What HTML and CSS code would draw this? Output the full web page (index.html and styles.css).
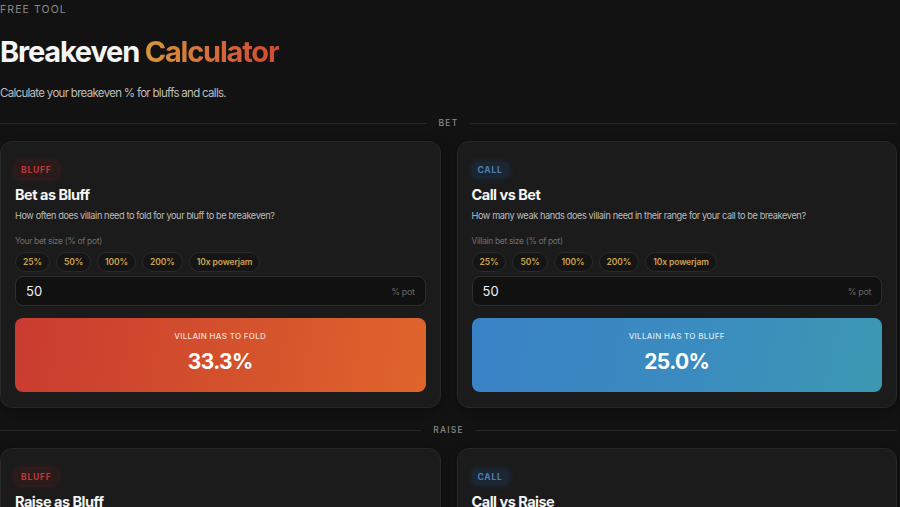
FILE: index.html
```html
<!DOCTYPE html>
<html>
<head>
<meta charset="utf-8">
<link rel="stylesheet" href="styles.css">
</head>
<body>
<div class="page">
  <div class="eyebrow">FREE TOOL</div>
  <h1 class="title">Breakeven <span class="grad">Calculator</span></h1>
  <p class="subtitle">Calculate your breakeven % for bluffs and calls.</p>

  <div class="sep"><span>BET</span></div>
  <div class="grid">
    <div class="card">
      <span class="badge bluff">BLUFF</span>
      <h2 class="card-title">Bet as Bluff</h2>
      <p class="desc">How often does villain need to fold for your bluff to be breakeven?</p>
      <div class="label">Your bet size (% of pot)</div>
      <div class="pills">
        <span class="pill">25%</span><span class="pill">50%</span><span class="pill">100%</span><span class="pill">200%</span><span class="pill">10x powerjam</span>
      </div>
      <div class="input"><span class="val">50</span><span class="unit">% pot</span></div>
      <div class="result red">
        <div class="r-label">VILLAIN HAS TO FOLD</div>
        <div class="r-val">33.3%</div>
      </div>
    </div>
    <div class="card">
      <span class="badge call">CALL</span>
      <h2 class="card-title">Call vs Bet</h2>
      <p class="desc">How many weak hands does villain need in their range for your call to be breakeven?</p>
      <div class="label">Villain bet size (% of pot)</div>
      <div class="pills">
        <span class="pill">25%</span><span class="pill">50%</span><span class="pill">100%</span><span class="pill">200%</span><span class="pill">10x powerjam</span>
      </div>
      <div class="input"><span class="val">50</span><span class="unit">% pot</span></div>
      <div class="result blue">
        <div class="r-label">VILLAIN HAS TO BLUFF</div>
        <div class="r-val">25.0%</div>
      </div>
    </div>
  </div>

  <div class="sep"><span>RAISE</span></div>
  <div class="grid">
    <div class="card">
      <span class="badge bluff">BLUFF</span>
      <h2 class="card-title">Raise as Bluff</h2>
      <p class="desc">How often does villain need to fold for your raise to be breakeven?</p>
    </div>
    <div class="card">
      <span class="badge call">CALL</span>
      <h2 class="card-title">Call vs Raise</h2>
      <p class="desc">How many weak hands does villain need for your call to be breakeven?</p>
    </div>
  </div>
</div>
</body>
</html>
```
FILE: styles.css
```css
html, body {
  margin: 0;
  padding: 0;
  background: #121212;
  color: #f2f2f2;
  font-family: "Inter", "Noto Sans", sans-serif;
  overflow: hidden;
  height: 507px;
}
.page {
  width: 897px;
  padding: 0;
}
.eyebrow {
  font-size: 10.5px;
  letter-spacing: 1.1px;
  color: #8a8a8a;
  line-height: 14px;
  margin-top: 3px;
}
.title {
  margin: 17px 0 0 0;
  font-size: 29px;
  line-height: 36px;
  font-weight: 700;
  letter-spacing: -1.2px;
  color: #f5f5f5;
}
.grad {
  background: linear-gradient(90deg, #d8973c 0%, #d4643a 60%, #cf4a30 100%);
  -webkit-background-clip: text;
  background-clip: text;
  color: transparent;
}
.subtitle {
  margin: 15px 0 0 0;
  font-size: 11.5px;
  line-height: 16px;
  color: #bdbdbd;
  letter-spacing: -0.7px;
}
.sep {
  display: flex;
  align-items: center;
  gap: 12px;
  margin-top: 15px;
  height: 14px;
}
.sep::before, .sep::after {
  content: "";
  flex: 1;
  height: 1px;
  background: #252525;
}
.sep span {
  font-size: 8.5px;
  font-weight: 500;
  letter-spacing: 1.2px;
  color: #8a8a8a;
}
.grid {
  display: grid;
  grid-template-columns: 1fr 1fr;
  gap: 16px;
  margin-top: 11px;
}
.card {
  background: #1b1b1b;
  border: 1px solid #282828;
  border-radius: 12px;
  padding: 20px 14px 15px 14px;
  box-shadow: 0 2px 8px rgba(0,0,0,0.35);
}
.badge {
  display: block;
  width: fit-content;
  font-size: 8.5px;
  font-weight: 700;
  letter-spacing: 0.8px;
  padding: 3px 6px;
  border-radius: 6px;
  line-height: 10px;
}
.badge.bluff {
  color: #c0393a;
  background: #2a1a1a;
  box-shadow: 0 0 6px rgba(180,40,40,0.35);
}
.badge.call {
  color: #4f7fb4;
  background: #1c2633;
  box-shadow: 0 0 6px rgba(40,90,150,0.3);
}
.card-title {
  margin: 7px 0 0 0;
  font-size: 14.5px;
  line-height: 20px;
  font-weight: 700;
  letter-spacing: -0.5px;
  color: #f5f5f5;
}
.desc {
  margin: 4px 0 0 0;
  font-size: 9.2px;
  line-height: 14px;
  color: #bcbcbc;
  letter-spacing: -0.4px;
}
.label {
  margin-top: 12px;
  font-size: 8.5px;
  line-height: 12px;
  color: #6e6e6e;
  letter-spacing: -0.35px;
}
.pills {
  display: flex;
  gap: 6px;
  margin-top: 5px;
}
.pill {
  font-size: 8.5px;
  font-weight: 600;
  color: #cfa450;
  background: #151515;
  border: 1px solid #2a2a2a;
  border-radius: 10px;
  padding: 0 7px;
  height: 18px;
  line-height: 18px;
  letter-spacing: -0.1px;
}
.input {
  margin-top: 4px;
  height: 28px;
  background: #111111;
  border: 1px solid #2e2e2e;
  border-radius: 8px;
  display: flex;
  align-items: center;
  justify-content: space-between;
  padding: 0 10px 0 10px;
}
.val {
  font-size: 13px;
  color: #f0f0f0;
}
.unit {
  font-size: 9px;
  color: #666;
  letter-spacing: -0.4px;
}
.result {
  margin-top: 12px;
  height: 74px;
  border-radius: 8px;
  display: flex;
  flex-direction: column;
  align-items: center;
  padding-top: 13px;
  box-sizing: border-box;
}
.result.red {
  background: linear-gradient(100deg, #c93b30 0%, #d4522c 55%, #e0652c 100%);
}
.result.blue {
  background: linear-gradient(100deg, #3a82c7 0%, #3a8cbf 55%, #3c98b2 100%);
}
.r-label {
  font-size: 8px;
  font-weight: 500;
  letter-spacing: 0.3px;
  color: rgba(255,255,255,0.82);
  line-height: 10px;
}
.r-val {
  margin-top: 7px;
  font-size: 21px;
  font-weight: 700;
  line-height: 28px;
  letter-spacing: -0.6px;
  color: #fff;
}
```
